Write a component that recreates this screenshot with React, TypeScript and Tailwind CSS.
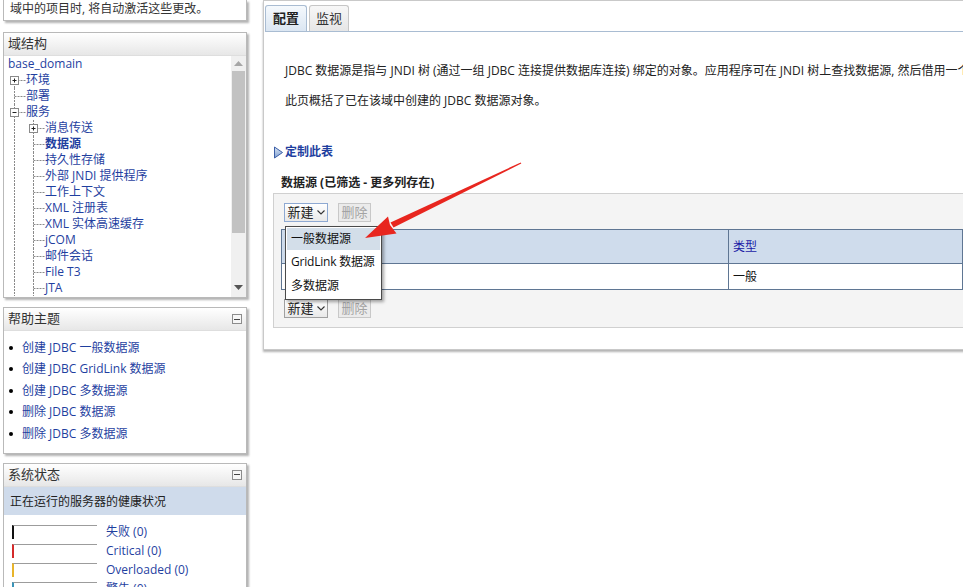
import React from 'react';

const LINK = 'text-[#1f3f9f]';

interface TreeItem {
  label: string;
  level: 1 | 2;
  expander?: '+' | '-';
  bold?: boolean;
  first?: boolean;
}

const treeItems: TreeItem[] = [
  { label: '环境', level: 1, expander: '+', first: true },
  { label: '部署', level: 1 },
  { label: '服务', level: 1, expander: '-' },
  { label: '消息传送', level: 2, expander: '+' },
  { label: '数据源', level: 2, bold: true },
  { label: '持久性存储', level: 2 },
  { label: '外部 JNDI 提供程序', level: 2 },
  { label: '工作上下文', level: 2 },
  { label: 'XML 注册表', level: 2 },
  { label: 'XML 实体高速缓存', level: 2 },
  { label: 'jCOM', level: 2 },
  { label: '邮件会话', level: 2 },
  { label: 'File T3', level: 2 },
  { label: 'JTA', level: 2 },
];

function TreeRow({ item }: { item: TreeItem }) {
  const w = item.level === 1 ? 22 : 41;
  const x = item.level === 1 ? 10.5 : 29.5;
  return (
    <div className="flex h-[16px] items-center whitespace-nowrap">
      <svg width={w} height={16} className="shrink-0">
        <line x1={10.5} y1={item.first ? 8 : 0} x2={10.5} y2={16} stroke="#8a8a8a" strokeDasharray="2 1" />
        {item.level === 2 && (
          <line x1={29.5} y1={0} x2={29.5} y2={16} stroke="#8a8a8a" strokeDasharray="2 1" />
        )}
        <line x1={x} y1={8.5} x2={w} y2={8.5} stroke="#8a8a8a" strokeDasharray="2 1" />
        {item.expander && (
          <g>
            <rect x={x - 4} y={4.5} width={8} height={8} fill="#fff" stroke="#8a8a8a" />
            <line x1={x - 2} y1={8.5} x2={x + 2} y2={8.5} stroke="#222" />
            {item.expander === '+' && <line x1={x} y1={6.5} x2={x} y2={10.5} stroke="#222" />}
          </g>
        )}
      </svg>
      <span className={`${LINK} ${item.bold ? 'font-bold' : ''}`}>{item.label}</span>
    </div>
  );
}

function CollapseIcon() {
  return (
    <div className="flex h-[10px] w-[10px] items-center justify-center border border-[#8c8c8c] bg-[#f6f6f6]">
      <div className="h-px w-[6px] bg-[#444]" />
    </div>
  );
}

function PanelHeader({ title, collapse }: { title: string; collapse?: boolean }) {
  return (
    <div className="flex h-[23px] items-center justify-between border-b border-[#dedede] bg-gradient-to-b from-white to-[#e7e7e7] pl-[4px] pr-[4px]">
      <span className="text-[13px] text-[#333]">{title}</span>
      {collapse && <CollapseIcon />}
    </div>
  );
}

const panel = 'w-[244px] border border-[#b9b9b9] bg-white shadow-[2px_2px_2px_rgba(0,0,0,0.3)]';

const helpLinks = [
  '创建 JDBC 一般数据源',
  '创建 JDBC GridLink 数据源',
  '创建 JDBC 多数据源',
  '删除 JDBC 数据源',
  '删除 JDBC 多数据源',
];

const health = [
  { label: '失败 (0)', color: 'border-l-[#111]' },
  { label: 'Critical (0)', color: 'border-l-[#d42a2a]' },
  { label: 'Overloaded (0)', color: 'border-l-[#e8b42a]' },
  { label: '警告 (0)', color: 'border-l-[#3a94b8]' },
];

function NewButton({ focused }: { focused?: boolean }) {
  return (
    <div
      className={`flex h-[19px] w-[44px] items-center justify-center gap-[3px] border bg-gradient-to-b from-white to-[#e9e9e9] ${
        focused ? 'border-[#8ea9d2]' : 'border-[#a0a0a0]'
      }`}
    >
      <span className="text-[13px] text-[#222]">新建</span>
      <svg width={8} height={5} viewBox="0 0 8 5">
        <path d="M0.5 0.5 L4 4 L7.5 0.5" fill="none" stroke="#333" strokeWidth={1.1} />
      </svg>
    </div>
  );
}

function DeleteButton() {
  return (
    <div className="flex h-[19px] w-[33px] items-center justify-center border border-[#c8c8c8] bg-[#ebebeb] text-[13px] text-[#a3a3a3]">
      删除
    </div>
  );
}

export default function App() {
  return (
    <div className="relative flex h-[587px] w-[963px] items-start overflow-hidden bg-white text-[12px] text-[#222] font-['Open_Sans','Noto_Sans_CJK_SC',sans-serif]">
      {/* left column */}
      <div className="flex w-[263px] shrink-0 flex-col pl-[3px]">
        <div className={`${panel} h-[21px] border-t-0 pl-[6px] leading-[18px] text-[#333]`}>
          域中的项目时, 将自动激活这些更改。
        </div>

        <div className={`${panel} mt-[11px]`}>
          <PanelHeader title="域结构" />
          <div className="flex h-[241px]">
            <div className="flex-1 overflow-hidden">
              <div className="flex h-[16px] items-center pl-[4px]">
                <span className={LINK}>base_domain</span>
              </div>
              {treeItems.map((item) => (
                <TreeRow key={item.label} item={item} />
              ))}
            </div>
            <div className="flex w-[15px] flex-col items-center bg-[#f0f0f0] py-[4px]">
              <svg width={9} height={5} className="mt-[1px]">
                <path d="M0 5 L4.5 0 L9 5 Z" fill="#a6a6a6" />
              </svg>
              <div className="mt-[5px] h-[162px] w-[13px] bg-[#c2c2c2]" />
              <div className="flex-1" />
              <svg width={9} height={5} className="mb-[3px]">
                <path d="M0 0 L4.5 5 L9 0 Z" fill="#555" />
              </svg>
            </div>
          </div>
        </div>

        <div className={`${panel} mt-[9px]`}>
          <PanelHeader title="帮助主题" collapse />
          <ul className="pb-[8px] pt-[6px]">
            {helpLinks.map((t) => (
              <li key={t} className="flex h-[21.5px] items-center">
                <span className="ml-[5px] h-[4px] w-[4px] rounded-full bg-black" />
                <span className={`ml-[9px] ${LINK}`}>{t}</span>
              </li>
            ))}
          </ul>
        </div>

        <div className={`${panel} mt-[9px]`}>
          <PanelHeader title="系统状态" collapse />
          <div className="flex h-[28px] items-center bg-[#cfdbeb] pl-[6px] pt-[2px] text-[#222]">正在运行的服务器的健康状况</div>
          <div className="pt-[9px]">
            {health.map((h) => (
              <div key={h.label} className="flex h-[19px] items-start">
                <div className={`ml-[8px] mt-[1px] h-[14px] w-[85px] border-l-2 border-t border-t-[#9c9c9c] ${h.color}`} />
                <span className={`ml-[9px] leading-[16px] ${LINK}`}>{h.label}</span>
              </div>
            ))}
          </div>
        </div>
      </div>

      {/* main panel */}
      <div className="w-[710px] shrink-0 border border-r-0 border-[#c9c9c9] bg-white shadow-[0_2px_2px_rgba(0,0,0,0.3)]">
        <div className="ml-[1px] flex items-end gap-[2px] border-b border-[#a9bcd2] pt-[4px]">
          <div className="flex h-[26px] w-[42px] items-center justify-center rounded-t-[3px] border border-b-0 border-[#a9bcd2] bg-gradient-to-b from-[#f5f9fd] to-[#dbe6f2] text-[13px] font-bold text-[#222]">
            配置
          </div>
          <div className="flex h-[26px] w-[40px] items-center justify-center rounded-t-[3px] border border-b-0 border-[#c6c6c6] bg-gradient-to-b from-[#f7f7f7] to-[#e6e6e6] text-[13px] text-[#333]">
            监视
          </div>
        </div>

        <div className="pl-[9px] pb-[21px]">
          <p className="mt-[31px] whitespace-nowrap pl-[12px] leading-[16px]">
            JDBC 数据源是指与 JNDI 树 (通过一组 JDBC 连接提供数据库连接) 绑定的对象。应用程序可在 JNDI 树上查找数据源, 然后借用一个数据库连接。
          </p>
          <p className="mt-[14px] whitespace-nowrap pl-[12px] leading-[16px]">此页概括了已在该域中创建的 JDBC 数据源对象。</p>

          <div className="mt-[35px] flex h-[16px] items-center">
            <svg width={12} height={13} viewBox="0 0 12 13" className="shrink-0">
              <defs>
                <linearGradient id="tri" x1="0" y1="0" x2="0" y2="1">
                  <stop offset="0" stopColor="#d8e4f4" />
                  <stop offset="1" stopColor="#7f9fd0" />
                </linearGradient>
              </defs>
              <path d="M1.5 1 L9.5 6.5 L1.5 12 Z" fill="url(#tri)" stroke="#3b5ea6" strokeWidth={1} />
            </svg>
            <span className={`font-bold ${LINK}`}>定制此表</span>
          </div>

          <div className="mt-[15px] h-[16px] pl-[8px] font-bold leading-[16px] text-[#222]">数据源 (已筛选 - 更多列存在)</div>

          <div className="mt-[2px] border border-r-0 border-[#d0d0d0] bg-[#f4f4f4] pb-[9px] pt-[9px]">
            <div className="flex gap-[10px] pl-[10px]">
              <NewButton focused />
              <DeleteButton />
            </div>
            <div className="ml-[7px] mt-[7px] flex border border-[#5f7693] border-r-0">
              <div className="w-[447px] border-r border-[#5f7693]">
                <div className="h-[34px] border-b border-[#5f7693] bg-[#cfdcec]" />
                <div className="h-[25px] bg-white" />
              </div>
              <div className="w-[234px] border-r border-[#5f7693]">
                <div className="flex h-[34px] items-center border-b border-[#5f7693] bg-[#cfdcec] pl-[4px] text-[#1a1aa6]">类型</div>
                <div className="flex h-[25px] items-center bg-white pl-[4px] text-[#111]">一般</div>
              </div>
              <div className="flex-1">
                <div className="h-[34px] border-b border-[#5f7693] bg-[#cfdcec]" />
                <div className="h-[25px] bg-white" />
              </div>
            </div>
            <div className="mt-[9px] flex gap-[10px] pl-[10px]">
              <NewButton />
              <DeleteButton />
            </div>
          </div>
        </div>
      </div>

      {/* dropdown menu */}
      <div className="absolute left-[285px] top-[226px] w-[97px] border border-[#4a4a4a] bg-white p-px shadow-[2px_2px_3px_rgba(0,0,0,0.35)]">
        <div className="flex h-[22px] items-center bg-[#d3dee9] pl-[4px] text-[#111]">一般数据源</div>
        <div className="flex h-[24px] items-center whitespace-nowrap pl-[4px] tracking-[-0.2px] text-[#111]">GridLink 数据源</div>
        <div className="flex h-[24px] items-center pl-[4px] text-[#111]">多数据源</div>
      </div>

      {/* red arrow */}
      <svg className="pointer-events-none absolute left-0 top-0" width={963} height={587}>
        <polygon points="521.3,163.5 520.7,162.5 390.5,222.5 393.5,227.5" fill="#e8261f" />
        <polygon points="365,238 388,216.5 390,225 396.5,233.5" fill="#e8261f" />
      </svg>
    </div>
  );
}
